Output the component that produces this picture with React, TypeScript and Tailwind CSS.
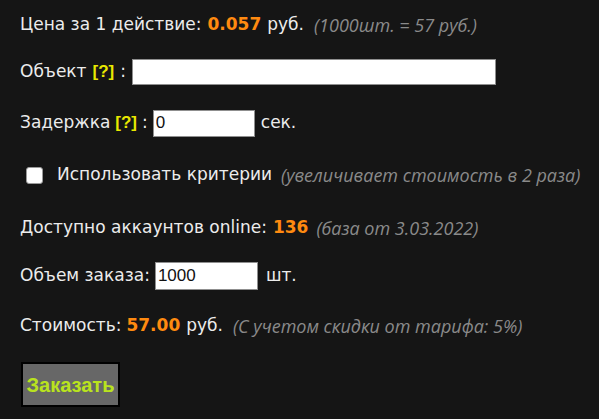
import React from "react";

const label = "text-[#ececec]";
const num = "text-[#ff8a10] font-bold";
const note = "text-[#8a8a8a] italic font-['Open_Sans',sans-serif] text-[18px]";

function Hint() {
  return <span className="text-[#e8e800] font-bold font-['Liberation_Sans',sans-serif] text-[17px]">[?]</span>;
}

export default function App() {
  return (
    <div className="w-[599px] h-[419px] bg-[#151515] font-['DejaVu_Sans',sans-serif] text-[17px] pl-[20px] overflow-hidden">
      <div className="h-[28px] mt-[11px] flex items-center whitespace-nowrap">
        <span className={label}>Цена за 1 действие:</span>
        <span className={`${num} ml-[6px]`}>0.057</span>
        <span className={`${label} ml-[6px]`}>руб.</span>
        <span className={`${note} ml-[10px]`}>(1000шт. = 57 руб.)</span>
      </div>

      <div className="h-[28px] mt-[19px] flex items-center whitespace-nowrap">
        <span className={label}>Объект</span>
        <span className="ml-[6px]"><Hint /></span>
        <span className={`${label} ml-[6px]`}>:</span>
        <input
          type="text"
          className="ml-[6px] w-[364px] h-[26px] bg-white border border-[#8f8f8f] px-[2px] outline-none"
        />
      </div>

      <div className="h-[28px] mt-[23px] flex items-center whitespace-nowrap">
        <span className={label}>Задержка</span>
        <span className="ml-[5px]"><Hint /></span>
        <span className={`${label} ml-[5px]`}>:</span>
        <input
          type="text"
          defaultValue="0"
          className="ml-[5px] w-[102px] h-[27px] bg-white border border-[#8f8f8f] px-[2px] text-[#111] font-['Liberation_Sans',sans-serif] text-[17px] outline-none"
        />
        <span className={`${label} ml-[6px]`}>сек.</span>
      </div>

      <div className="h-[28px] mt-[24px] flex items-center whitespace-nowrap">
        <span className="ml-[6px] w-[17px] h-[17px] rounded-[3px] bg-white border border-[#9a9a9a] inline-block" />
        <span className={`${label} ml-[14px]`}>Использовать критерии</span>
        <span className={`${note} ml-[9px]`}>(увеличивает стоимость в 2 раза)</span>
      </div>

      <div className="h-[28px] mt-[25px] flex items-center whitespace-nowrap">
        <span className={label}>Доступно аккаунтов online:</span>
        <span className={`${num} ml-[6px]`}>136</span>
        <span className={`${note} ml-[8px]`}>(база от 3.03.2022)</span>
      </div>

      <div className="h-[28px] mt-[20px] flex items-center whitespace-nowrap">
        <span className={label}>Объем заказа:</span>
        <input
          type="text"
          defaultValue="1000"
          className="ml-[5px] w-[103px] h-[28px] bg-white border border-[#8f8f8f] px-[2px] text-[#111] font-['Liberation_Sans',sans-serif] text-[17px] outline-none"
        />
        <span className={`${label} ml-[8px]`}>шт.</span>
      </div>

      <div className="h-[28px] mt-[22px] flex items-center whitespace-nowrap">
        <span className={label}>Стоимость:</span>
        <span className={`${num} ml-[5px]`}>57.00</span>
        <span className={`${label} ml-[6px]`}>руб.</span>
        <span className={`${note} ml-[10px]`}>(С учетом скидки от тарифа: 5%)</span>
      </div>

      <button className="mt-[22px] ml-[1px] w-[99px] h-[45px] bg-[#676767] border-2 border-black text-[#b9e31e] font-['Liberation_Sans',sans-serif] font-bold text-[20px]">
        Заказать
      </button>
    </div>
  );
}
